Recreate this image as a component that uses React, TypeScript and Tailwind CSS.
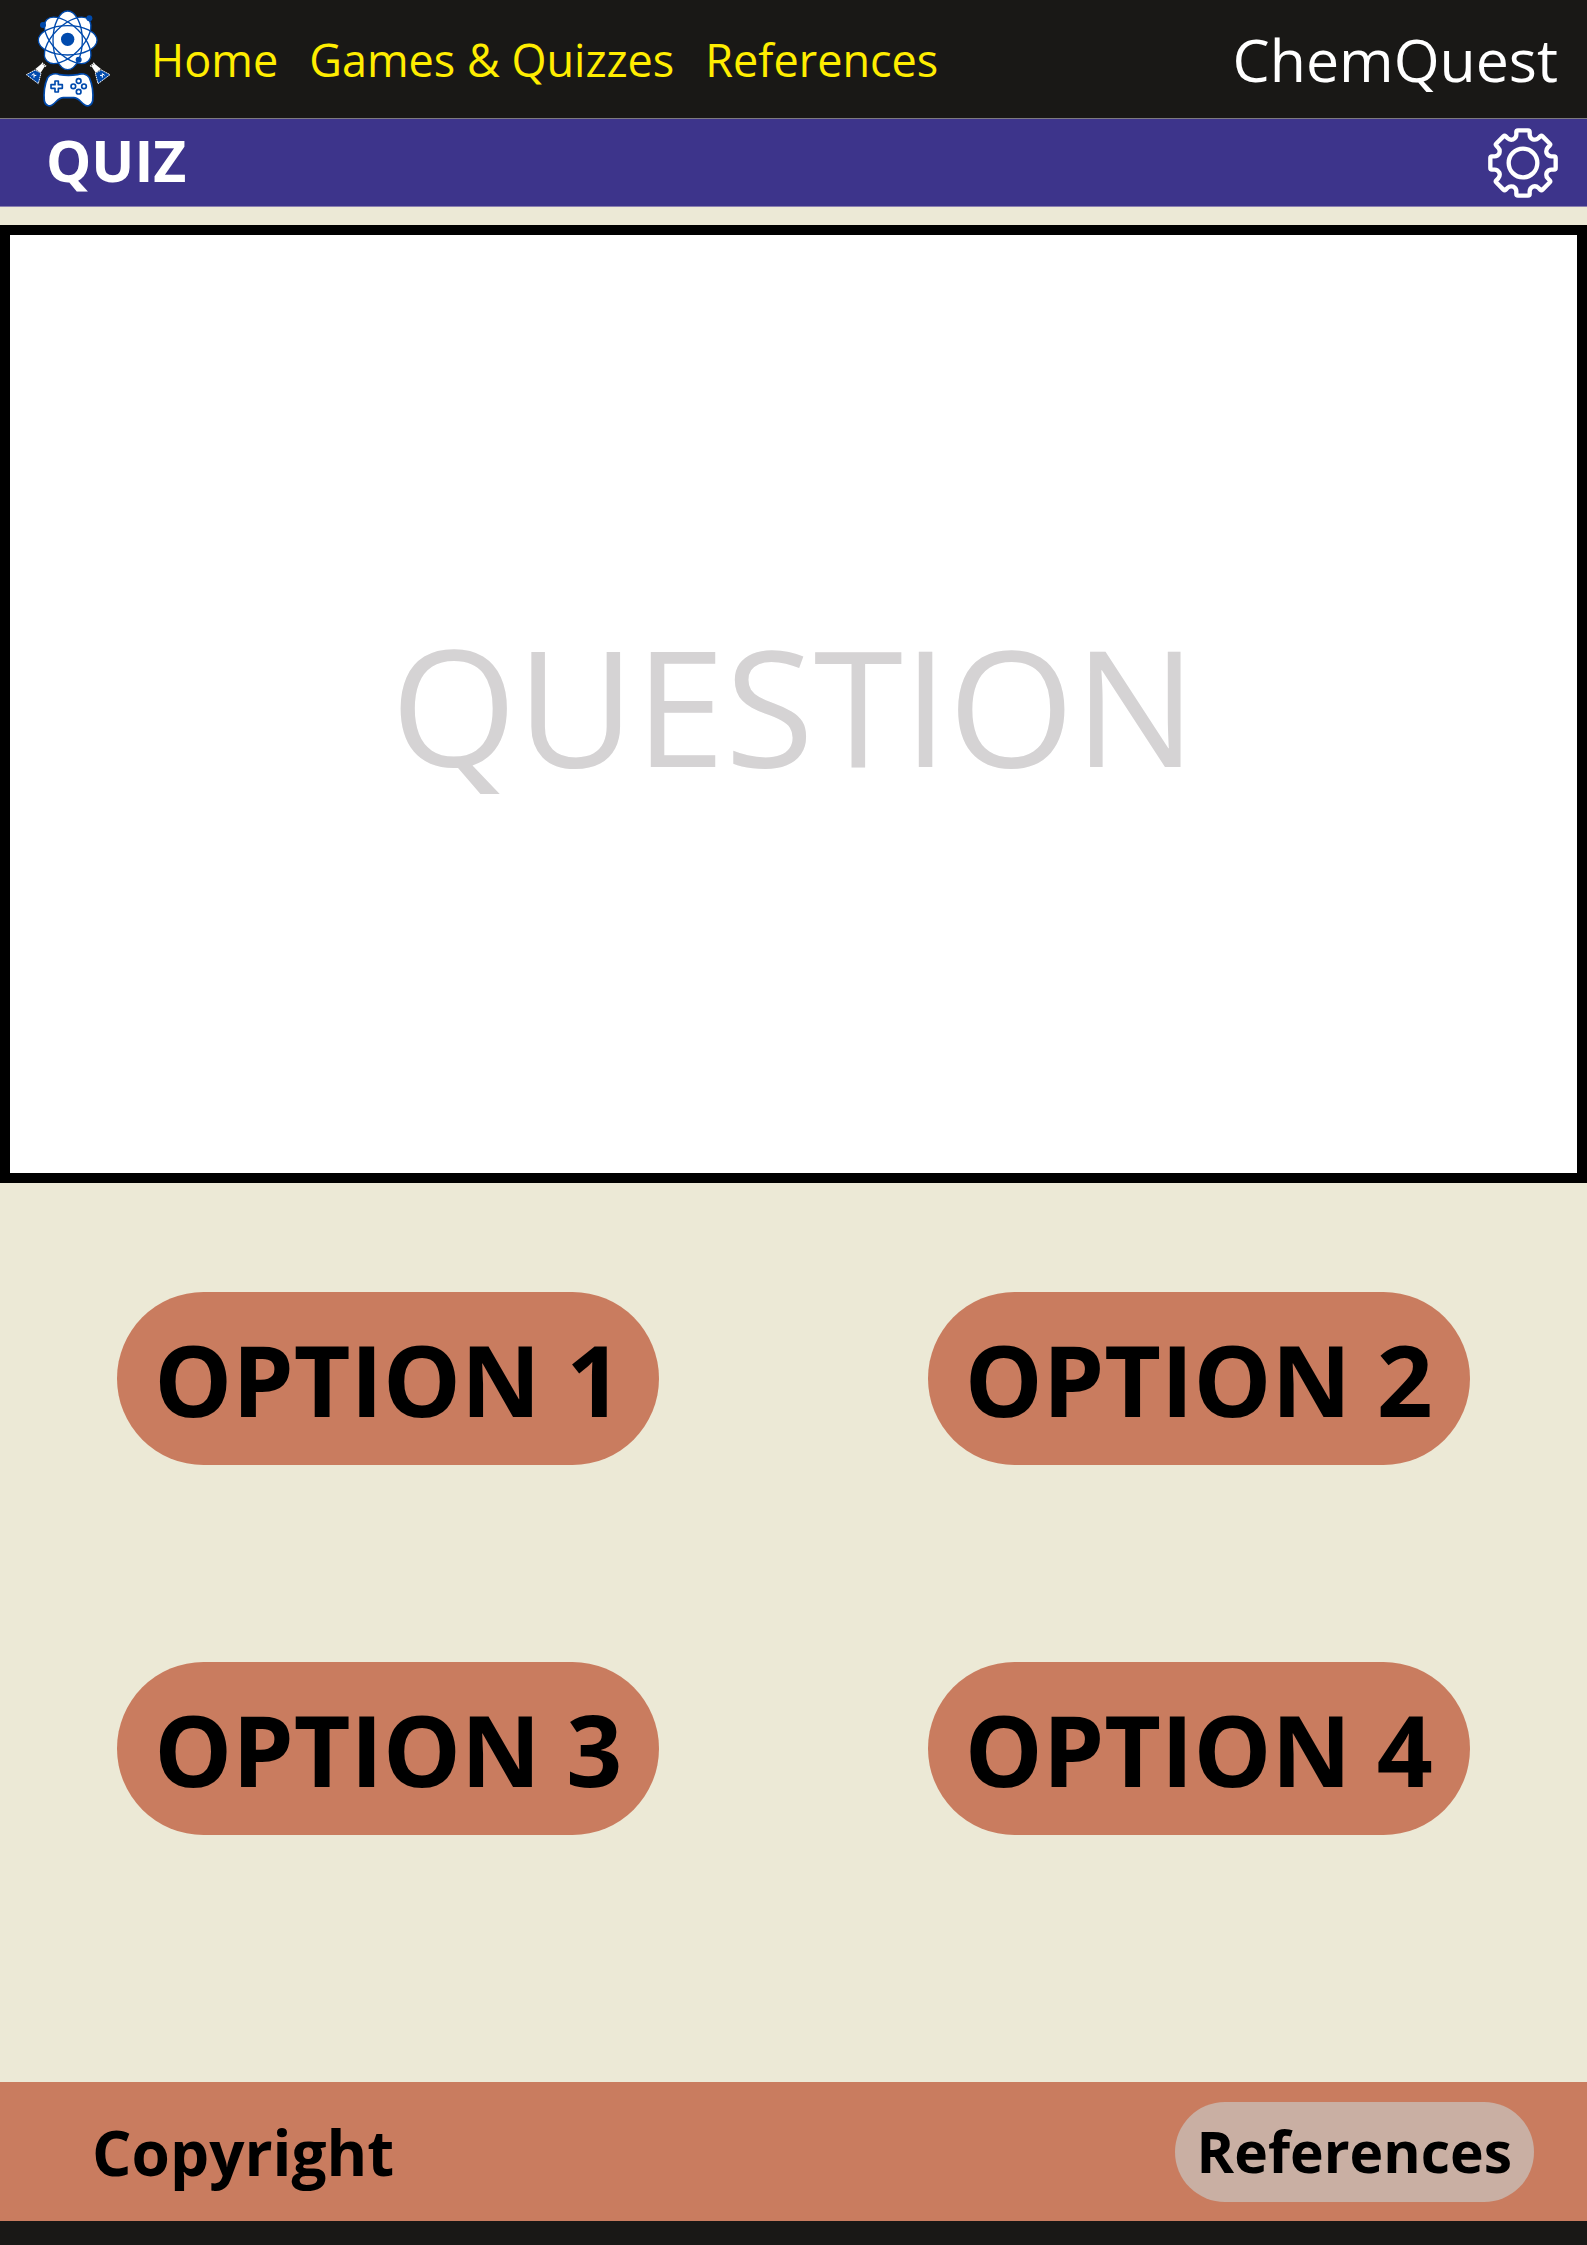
const BLUE = "#004aad";

function Flask() {
  return (
    <g strokeLinejoin="round">
      <path d="M107 205 L123 216 L136 196 L126 189 Z" fill="#fff" />
      <path d="M127 187 L139 197" stroke="#fff" strokeWidth="5" strokeDasharray="4 2" />
      <path d="M106 208 L80 222 L116 249 L124 217 Z" fill={BLUE} stroke="#fff" strokeWidth="3" strokeDasharray="5 2" />
      <path d="M96 224 L103 219 V231 M103 225 L110 224" stroke="#fff" strokeWidth="3" />
    </g>
  );
}

function Logo() {
  const petals = [0, 45, 90, 135];
  return (
    <svg viewBox="76 28 258 294" className="h-[98px] w-[86px] shrink-0" fill="none" role="img" aria-label="ChemQuest logo">
      {petals.map((a) => (
        <ellipse key={a} cx="204" cy="119" rx="88" ry="44" fill="#fff" transform={`rotate(${a} 204 119)`} />
      ))}
      {petals.map((a) => (
        <ellipse key={a} cx="204" cy="119" rx="88" ry="44" stroke={BLUE} strokeWidth="4" transform={`rotate(${a} 204 119)`} />
      ))}
      <g fill={BLUE}>
        <circle cx="204" cy="116" r="20" />
        <circle cx="130" cy="73" r="9" />
        <circle cx="269" cy="53" r="9" />
        <circle cx="237" cy="177" r="9" />
      </g>
      <path
        d="M144 231 C151 219 169 217 180 222 Q206 226 233 222 C245 217 262 219 269 231 C278 251 281 280 279 301 C276 315 263 320 253 311 C241 302 236 291 222 291 H191 C177 291 172 302 160 311 C150 320 137 315 134 301 C132 280 135 251 144 231 Z"
        fill="#fff"
        stroke={BLUE}
        strokeWidth="5"
      />
      <path
        d="M166 241 H176 V252 H188 V263 H176 V274 H166 V263 H154 V252 H166 Z"
        stroke={BLUE}
        strokeWidth="5"
        strokeLinejoin="round"
      />
      <g stroke={BLUE} strokeWidth="5">
        <circle cx="237" cy="241" r="7" />
        <circle cx="221" cy="257" r="7" />
        <circle cx="253" cy="257" r="7" />
        <circle cx="237" cy="273" r="7" />
      </g>
      <Flask />
      <g transform="translate(411 0) scale(-1 1)">
        <Flask />
      </g>
    </svg>
  );
}

function gearPath() {
  const out: string[] = [];
  for (let i = 0; i < 8; i++) {
    const at = (x: number, y: number, turn = i) => {
      const t = (turn * Math.PI) / 4;
      return `${(x * Math.cos(t) - y * Math.sin(t)).toFixed(1)} ${(x * Math.sin(t) + y * Math.cos(t)).toFixed(1)}`;
    };
    out.push(
      `${i === 0 ? "M" : "L"}${at(-20, -85)} L${at(-20, -93)} Q${at(-20, -98)} ${at(-15, -98)} L${at(15, -98)} Q${at(20, -98)} ${at(20, -93)} L${at(20, -85)}`,
      `Q${at(20, -76)} ${at(29, -71)} Q${at(-20, -76, i + 1)} ${at(-20, -85, i + 1)}`,
    );
  }
  return out.join(" ") + " Z";
}

function GearIcon() {
  return (
    <svg viewBox="-105 -105 210 210" className="size-[70px]" fill="none" stroke="#fff" strokeWidth="13" strokeLinejoin="round" aria-hidden="true">
      <path d={gearPath()} />
      <circle r="43" />
    </svg>
  );
}

const links = ["Home", "Games & Quizzes", "References"];
const options = ["OPTION 1", "OPTION 2", "OPTION 3", "OPTION 4"];

export default function App() {
  return (
    <div className="flex min-h-screen flex-col bg-[#ece9d6] font-['Open_Sans',sans-serif] text-black">
      <header className="flex h-[119px] items-center border-b border-[#7d7a80] bg-[#191816] pr-[29px] pl-[25px]">
        <Logo />
        <nav className="ml-10 flex gap-[31px] text-[45px] leading-none text-[#ffed00]">
          {links.map((l) => (
            <a key={l} href="#" className="whitespace-nowrap">
              {l}
            </a>
          ))}
        </nav>
        <span className="ml-auto text-[59px] leading-none text-white">ChemQuest</span>
      </header>

      <div className="flex h-[88px] items-center justify-between border-b border-[#8a7fb0] bg-[#3d348b] pr-[29px] pl-[46px]">
        <h1 className="pb-1 text-[57px] leading-none font-bold text-white">QUIZ</h1>
        <button type="button" aria-label="Settings">
          <GearIcon />
        </button>
      </div>

      <main className="flex grow flex-col pt-[18px]">
        <section className="flex h-[958px] items-center justify-center border-10 border-black bg-white">
          <p className="text-[162px] leading-none text-[#d5d3d4]">QUESTION</p>
        </section>
        <div className="mt-[109px] mb-auto grid grid-cols-2 justify-items-center gap-x-[34px] gap-y-[197px]">
          {options.map((o) => (
            <button
              key={o}
              type="button"
              className="h-[173px] rounded-full bg-[#c97c5f] px-[37px] text-[98px] leading-none font-bold whitespace-nowrap"
            >
              {o}
            </button>
          ))}
        </div>
      </main>

      <footer className="flex h-[163px] items-center justify-between border-b-[24px] border-[#191816] bg-[#c97c5f] pr-[53px] pl-[92px]">
        <span className="text-[62px] leading-none font-bold">Copyright</span>
        <a href="#" className="flex h-[100px] items-center rounded-full bg-[#c9afa3] px-[22px] text-[57px] leading-none font-bold">
          References
        </a>
      </footer>
    </div>
  );
}
